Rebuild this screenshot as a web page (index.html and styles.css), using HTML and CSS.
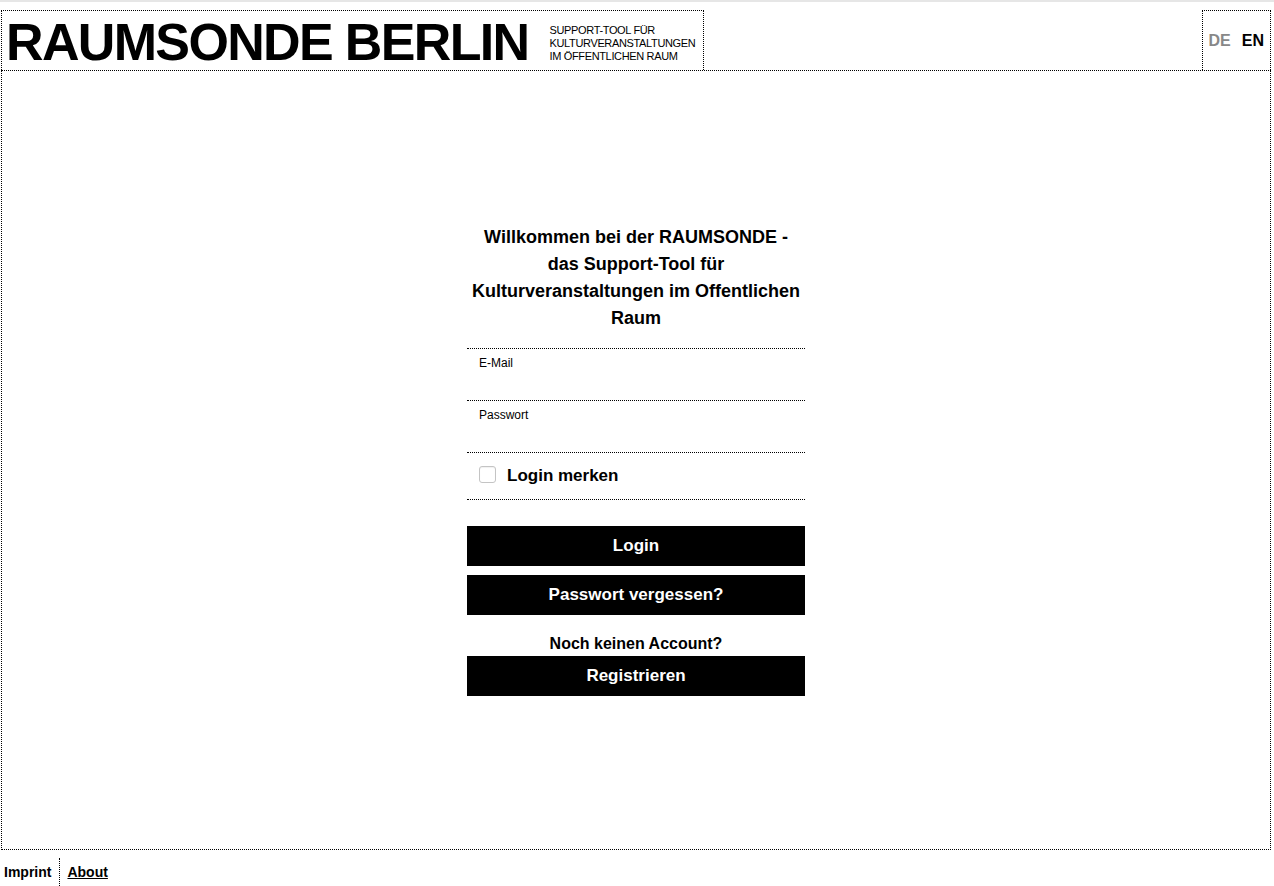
FILE: index.html
```html
<!DOCTYPE html>
<html lang="de">
  <head>
    <meta charset="UTF-8" />
    <meta name="viewport" content="width=device-width, initial-scale=1.0" />
    <title>Raumsonde Berlin - Login</title>
    <link rel="stylesheet" href="styles.css">
  </head>
  <body>
    <div id="page">
      <header class="site-header">
        <div class="brand">
          <span class="brand-title">RAUMSONDE BERLIN</span>
          <span class="brand-sub">SUPPORT-TOOL FÜR<br>KULTURVERANSTALTUNGEN<br>IM ÖFFENTLICHEN RAUM</span>
        </div>
        <div class="lang">
          <a href="#" class="lang-inactive">DE</a>
          <a href="#" class="lang-active">EN</a>
        </div>
      </header>

      <main class="screen">
        <form class="login-form" onsubmit="return false">
          <h1>Willkommen bei der RAUMSONDE -<br>das Support-Tool für<br>Kulturveranstaltungen im Offentlichen<br>Raum</h1>

          <label class="field">
            <span>E-Mail</span>
            <input type="email" name="email">
          </label>
          <label class="field">
            <span>Passwort</span>
            <input type="password" name="password">
          </label>
          <label class="remember">
            <input type="checkbox" name="remember">
            <span>Login merken</span>
          </label>

          <button type="submit" class="btn btn-first">Login</button>
          <button type="button" class="btn">Passwort vergessen?</button>
          <p class="no-account">Noch keinen Account?</p>
          <button type="button" class="btn">Registrieren</button>
        </form>
      </main>

      <footer class="site-footer">
        <a href="#" class="footer-link">Imprint</a>
        <a href="#" class="footer-link underline">About</a>
      </footer>
    </div>
  </body>
</html>
```

FILE: styles.css
```css
body {
  font-family: "Liberation Sans", Arial, sans-serif;
  color: #000;
  margin: 0;
  padding: 0;
  border-top: 2px solid #e6e6e6;
}

#page {
  margin: 0 3px 0 1px;
  padding-top: 8px;
}

a {
  color: inherit;
  text-decoration: none;
}

/* header */
.site-header {
  display: flex;
  justify-content: space-between;
  align-items: flex-end;
}

.brand,
.lang {
  height: 59px;
  border: 1px dotted #000;
  border-bottom: none;
  display: flex;
  align-items: center;
}

.brand {
  padding: 0 8px 0 4px;
  gap: 21px;
}

.brand-title {
  font-size: 52px;
  font-weight: bold;
  letter-spacing: -1.65px;
  line-height: 1;
  margin-top: 3px;
}

.brand-sub {
  font-size: 11px;
  line-height: 13px;
  letter-spacing: -0.35px;
  margin-top: 5px;
}

.lang {
  padding: 0 6px;
  gap: 11px;
  font-size: 16px;
  font-weight: bold;
}

.lang-inactive {
  color: #888;
}

/* main area */
.screen {
  height: 778px;
  border: 1px dotted #000;
  display: flex;
  justify-content: center;
  align-items: center;
}

.login-form {
  width: 338px;
  display: flex;
  flex-direction: column;
  margin-top: -1px;
}

.login-form h1 {
  font-size: 18px;
  line-height: 27px;
  text-align: center;
  margin: 0 0 16px;
}

.field {
  display: flex;
  flex-direction: column;
  height: 52px;
  border-top: 1px dotted #000;
  padding: 7px 12px 0;
  box-sizing: border-box;
  font-size: 12px;
}

.field input {
  border: none;
  outline: none;
  background: transparent;
  font: inherit;
  font-size: 16px;
  padding: 2px 0;
}

.remember {
  display: flex;
  align-items: center;
  gap: 11px;
  height: 48px;
  border-top: 1px dotted #000;
  border-bottom: 1px dotted #000;
  padding: 0 12px;
  box-sizing: border-box;
  font-size: 17px;
  font-weight: bold;
  cursor: pointer;
}

.remember input {
  appearance: none;
  -webkit-appearance: none;
  width: 17px;
  height: 17px;
  margin: 0 0 2px;
  border: 1px solid #c4c4c4;
  border-radius: 3px;
  background: #fff;
  box-shadow: inset 0 1px 1px rgba(0, 0, 0, 0.06);
}

.btn {
  height: 40px;
  border: none;
  background: #000;
  color: #fff;
  font-family: inherit;
  font-size: 17px;
  font-weight: bold;
  margin-top: 9px;
  cursor: pointer;
}

.btn-first {
  margin-top: 26px;
}

.no-account {
  font-size: 16px;
  font-weight: bold;
  text-align: center;
  line-height: 18px;
  margin: 20px 0 -6px;
}

/* footer */
.site-footer {
  display: flex;
  margin-top: 8px;
  height: 28px;
  font-size: 14px;
  font-weight: bold;
}

.footer-link {
  display: flex;
  align-items: center;
  padding: 0 8px 0 3px;
}

.footer-link.underline {
  text-decoration: underline;
  border-left: 1px dotted #000;
  padding-left: 7px;
}
```
